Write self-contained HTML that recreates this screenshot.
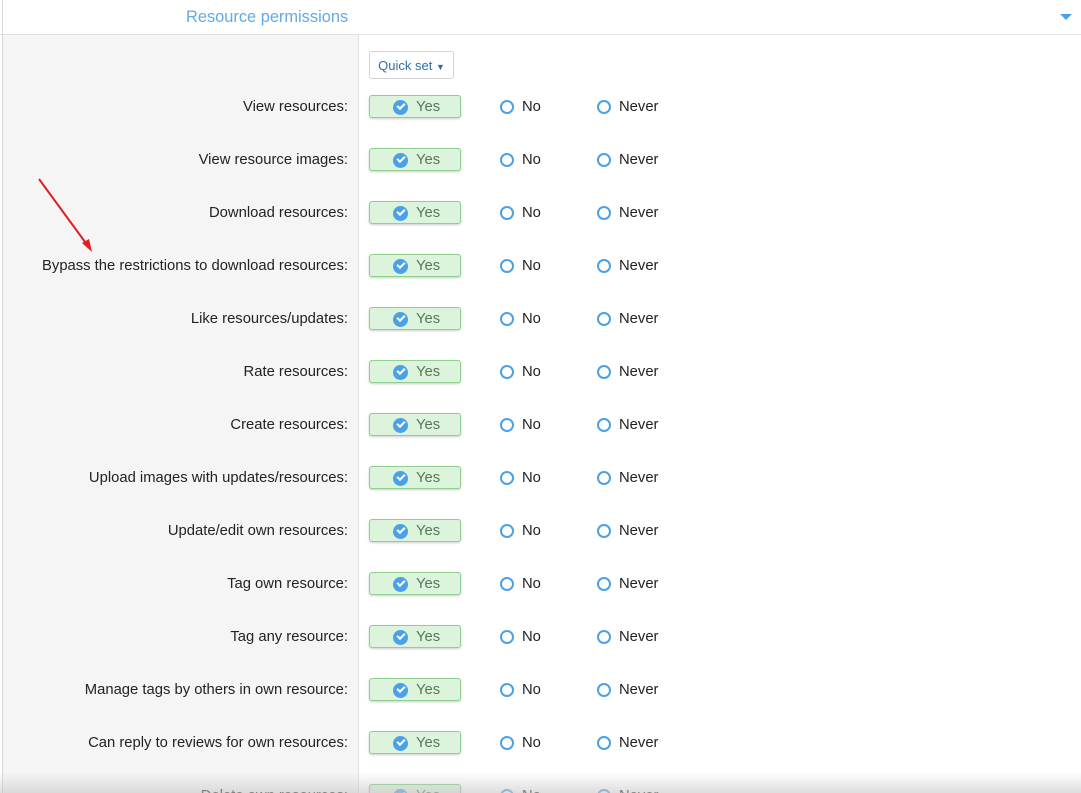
<!DOCTYPE html>
<html><head><style>
html,body{margin:0;width:1081px;height:793px;overflow:hidden}
body{background:#fff;font-family:"Liberation Sans",sans-serif;position:relative}
.hdr{position:absolute;left:0;top:0;width:1081px;height:34px;border-bottom:1px solid #e2e2e2}
.hdr span{position:absolute;left:186px;top:8px;font-size:16.4px;color:#63a9e8}
.lb{position:absolute;left:2px;top:0;width:1px;height:793px;background:#d8d8d8}
.left{position:absolute;left:3px;top:35px;width:355px;height:758px;background:#f5f5f5;border-right:1px solid #e0e0e0}
.qs{position:absolute;left:369px;top:51px;border:1px solid #d3d3d3;border-radius:3px;background:#fff;font-size:13px;color:#2f6ea8;line-height:28px;text-align:center;box-sizing:border-box;width:85px;height:28px}
.lbl{position:absolute;right:733px;font-size:14.8px;color:#222;white-space:nowrap}
.yes{position:absolute;left:369px;width:92px;height:23px;box-sizing:border-box;border:1px solid #8fd08f;border-radius:3px;background:#dcf3dc;box-shadow:0 1px 2px rgba(0,0,0,.2);font-size:14.8px;color:#557a55;line-height:23px}
.yes i{position:absolute;left:23px;top:4px;width:15px;height:15px;border-radius:50%;background:#4aa1e8}
.yes i:after{content:"";position:absolute;left:4px;top:3px;width:6px;height:3px;border-left:2px solid #fff;border-bottom:2px solid #fff;transform:rotate(-45deg)}
.yes b{font-weight:normal;position:absolute;left:46px}
.r{position:absolute;width:10px;height:10px;border:2px solid #4aa1e8;border-radius:50%}
.t{position:absolute;font-size:14.8px;color:#222}
.sh{position:absolute;left:0;top:772px;width:1081px;height:21px;background:linear-gradient(rgba(255,255,255,0),rgba(200,200,200,.6))}
</style></head><body>
<div class="hdr"><span>Resource permissions</span>
<svg style="position:absolute;left:1060px;top:14px" width="12" height="7"><path d="M0 0L12 0L6 6Z" fill="#4aa1e8"/></svg></div>
<div class="lb"></div>
<div class="left"></div>
<div class="qs">Quick set <span style="font-size:9px">&#9660;</span></div>
<div id="rows"></div>
<svg style="position:absolute;left:30px;top:170px" width="70" height="90"><path d="M9 9L58 76" stroke="#e02020" stroke-width="2"/><path d="M62 82L52 73L59 69Z" fill="#e02020"/></svg>
<script>
var L=["View resources:","View resource images:","Download resources:","Bypass the restrictions to download resources:","Like resources/updates:","Rate resources:","Create resources:","Upload images with updates/resources:","Update/edit own resources:","Tag own resource:","Tag any resource:","Manage tags by others in own resource:","Can reply to reviews for own resources:","Delete own resources:"];
var h="";L.forEach(function(s,i){var c=106+53*i;
h+='<div class="lbl" style="top:'+(c-7)+'px">'+s+'</div>';
h+='<div class="yes" style="top:'+(c-11)+'px"><i></i><b>Yes</b></div>';
h+='<div class="r" style="left:500px;top:'+(c-6)+'px"></div><div class="t" style="left:522px;top:'+(c-7)+'px">No</div>';
h+='<div class="r" style="left:597px;top:'+(c-6)+'px"></div><div class="t" style="left:619px;top:'+(c-7)+'px">Never</div>';});
document.getElementById("rows").innerHTML=h;
</script>
<div class="sh"></div>
</body></html>
